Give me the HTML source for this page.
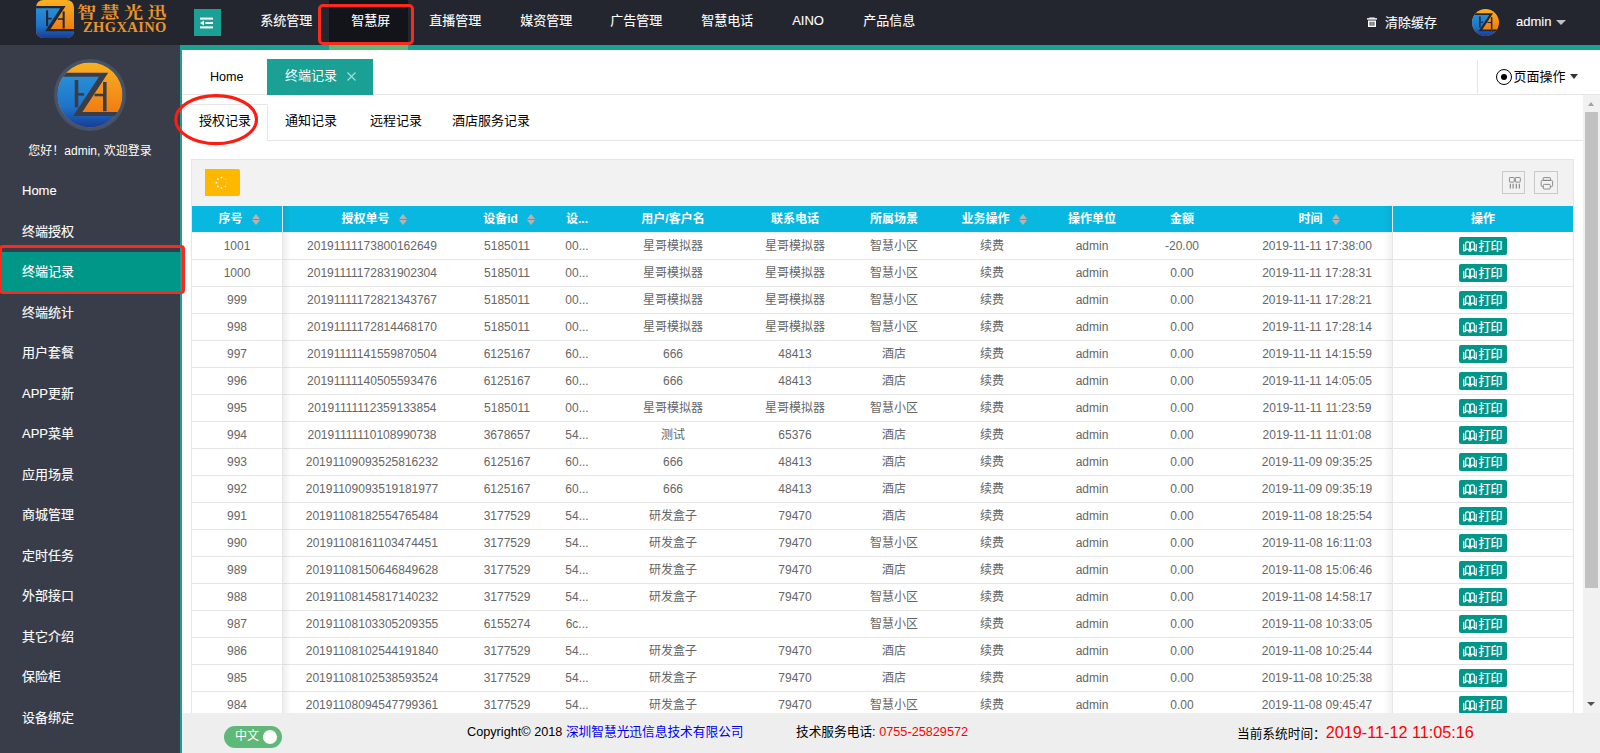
<!DOCTYPE html>
<html lang="zh-CN">
<head>
<meta charset="utf-8">
<title>智慧光迅</title>
<style>
*{box-sizing:border-box;margin:0;padding:0}
html,body{width:1600px;height:753px;overflow:hidden;background:#fff}
body{font-family:"Liberation Sans","Noto Sans CJK SC",sans-serif;font-size:14px;color:#333;position:relative}
.abs{position:absolute}
#hdr{position:absolute;left:0;top:0;width:1600px;height:45px;background:#23262e}
#hline{position:absolute;left:180px;top:45px;width:1420px;height:5px;background:#1aa094}
.nav{position:absolute;top:0;height:45px;line-height:42px;color:#fff;font-size:13px;white-space:nowrap;-webkit-text-stroke:0.1px #fff}
#navon{position:absolute;left:329px;top:0;width:79px;height:45px;background:#131419}
#navonb{position:absolute;left:329px;top:45px;width:79px;height:5px;background:#5fb878}
#ham{position:absolute;left:194px;top:9px;width:27px;height:27px;background:#1aa094}
#side{position:absolute;left:0;top:45px;width:180px;height:708px;background:#393d49}
#sideb{position:absolute;left:180px;top:45px;width:2px;height:708px;background:#1aa094}
.mi{position:absolute;left:0;width:180px;height:41px;line-height:41px;padding-left:22px;color:#fff;font-size:13px;white-space:nowrap;-webkit-text-stroke:0.1px #fff}
.mi.on{background:#009688}
.red{position:absolute;border:3px solid #fb2a1c;border-radius:4px}
#tabbar{position:absolute;left:182px;top:50px;width:1418px;height:45px;background:#fff;border-bottom:1px solid #e6e6e6}
#tabon{position:absolute;left:267px;top:59px;width:106px;height:36px;background:#1aa094;color:#fff;font-size:13px;line-height:34px;padding-left:18px;white-space:nowrap}
#pgop{position:absolute;left:1477px;top:60px;width:123px;height:34px;border-left:1px solid #e6e6e6;font-size:13px;line-height:34px;color:#000;white-space:nowrap}
.st{position:absolute;top:101px;height:40px;line-height:40px;font-size:13px;color:#000;white-space:nowrap}
#stline{position:absolute;left:182px;top:140px;width:1401px;height:1px;background:#e6e6e6}
#ston{position:absolute;left:182px;top:104px;width:86px;height:37px;border:1px solid #e6e6e6;border-bottom:1px solid #fff;border-left:none;border-radius:0 2px 0 0;background:#fff}
#panel{position:absolute;left:191px;top:159px;width:1383px;height:554px;background:#f2f2f2;border:1px solid #e6e6e6;border-bottom:none}
#thead{position:absolute;left:192px;top:206px;width:1381px;height:26px;background:#09b8e0}
.th{position:absolute;top:206px;height:26px;line-height:26px;text-align:center;color:#fff;font-size:12px;font-weight:bold;white-space:nowrap}
.tr{position:absolute;left:192px;width:1381px;height:27px;background:#fff;border-bottom:1px solid #e6e6e6}
.td{position:absolute;top:0;height:26px;line-height:26px;text-align:center;color:#666;font-size:12px;white-space:nowrap}
.vline{position:absolute;top:206px;width:1px;height:507px;background:#e6e6e6}
.btn{position:absolute;left:1459px;top:5px;width:48px;height:18px;background:#009688;border-radius:2px;color:#fff;font-size:12px;line-height:18px;white-space:nowrap}
#foot{position:absolute;left:182px;top:713px;width:1418px;height:40px;background:#eeeeee}
.ft{position:absolute;top:713px;height:40px;line-height:38px;font-size:12.7px;color:#000;white-space:nowrap}
#sb{position:absolute;left:1583px;top:95px;width:17px;height:618px;background:#f1f1f1}
#sbt{position:absolute;left:1585px;top:112px;width:13px;height:476px;background:#c1c1c1}
.tool{position:absolute;top:171px;border:1px solid #c9c9c9;background:#f2f2f2}
</style>
</head>
<body>

<svg width="0" height="0" style="position:absolute">
<defs>
<linearGradient id="gO" x1="0" y1="0" x2="0" y2="1"><stop offset="0" stop-color="#f9b122"/><stop offset="0.8" stop-color="#f07a12"/><stop offset="1" stop-color="#ee7410"/></linearGradient>
<linearGradient id="gB" x1="0" y1="0" x2="0" y2="1"><stop offset="0" stop-color="#2a8fd8"/><stop offset="0.6" stop-color="#1e74c8"/><stop offset="1" stop-color="#173c96"/></linearGradient>
</defs>
</svg>
<div id="hdr"></div><div id="hline"></div><div id="side"></div><div id="sideb"></div>
<svg class="abs" style="left:36px;top:0;overflow:hidden" width="38" height="38" viewBox="0 0 100 100"><defs><clipPath id="cpL"><rect x="0" y="0" width="100" height="100" rx="19"/></clipPath></defs><g clip-path="url(#cpL)">
<rect x="0" y="0" width="100" height="100" fill="url(#gO)"/>
<path d="M0 19 H71 L32 79 H100 V100 H0 Z" fill="url(#gB)"/>
<path d="M0 15.7 H78 L38.3 76 H100 V82.3 H24.2 L63.9 22 H0 Z" fill="#23262e"/>
<rect x="26.5" y="27" width="5.5" height="42" fill="#23262e"/>
<rect x="31" y="47" width="10" height="4" fill="#23262e"/>
<rect x="70" y="30" width="5.5" height="45" fill="#23262e"/>
<rect x="57" y="48" width="14" height="4" fill="#23262e"/>
</g></svg>
<div class="abs" style="left:77px;top:2px;height:20px;font-family:'Noto Serif CJK SC','Liberation Serif',serif;font-weight:bold;font-size:16px;line-height:20px;letter-spacing:3.6px;color:#ea942c;white-space:nowrap;transform:scaleX(1.2);transform-origin:0 0">智慧光迅</div>
<div class="abs" style="left:83px;top:19px;height:16px;font-family:'Liberation Serif',serif;font-weight:bold;font-size:14.5px;line-height:16px;letter-spacing:0.4px;color:#ea942c;white-space:nowrap">ZHGXAINO</div>
<div id="ham"><svg width="27" height="27" viewBox="0 0 27 27"><g fill="#fff"><rect x="6" y="8.6" width="13" height="2"/><rect x="11.4" y="13" width="7.6" height="2"/><rect x="6" y="17.4" width="13" height="2"/><path d="M6 14 L10 11.6 V16.4Z"/></g></svg></div>
<div id="navon"></div><div id="navonb"></div>
<div class="nav" style="left:260.2px">系统管理</div>
<div class="nav" style="left:351.2px">智慧屏</div>
<div class="nav" style="left:429.2px">直播管理</div>
<div class="nav" style="left:520.2px">媒资管理</div>
<div class="nav" style="left:610.2px">广告管理</div>
<div class="nav" style="left:701.2px">智慧电话</div>
<div class="nav" style="left:792.2px">AINO</div>
<div class="nav" style="left:863.2px">产品信息</div>
<div class="red" style="left:318px;top:4px;width:96px;height:41px;border-radius:5px"></div>
<svg class="abs" style="left:1366px;top:16px" width="12" height="12" viewBox="0 0 12 12"><g fill="#fff"><rect x="1" y="2.2" width="10" height="1.4"/><rect x="3.2" y="1.5" width="5.6" height="1"/><path d="M2 4.5 H10 V11 H2Z M3.6 5.8 V9.8 H4.6 V5.8Z M5.5 5.8 V9.8 H6.5 V5.8Z M7.4 5.8 V9.8 H8.4 V5.8Z" fill-rule="evenodd"/></g></svg>
<div class="nav" style="left:1385px;line-height:45px">清除缓存</div>
<svg class="abs" style="left:1472px;top:9px" width="27" height="27" viewBox="0 0 100 100"><defs><clipPath id="cpA"><circle cx="50" cy="50" r="50"/></clipPath></defs><g clip-path="url(#cpA)">
<rect x="0" y="0" width="100" height="100" fill="url(#gO)"/>
<path d="M0 19 H71 L32 79 H100 V100 H0 Z" fill="url(#gB)"/>
<path d="M0 15.7 H78 L38.3 76 H100 V82.3 H24.2 L63.9 22 H0 Z" fill="#23262e"/>
<rect x="26.5" y="27" width="5.5" height="42" fill="#23262e"/>
<rect x="31" y="47" width="10" height="4" fill="#23262e"/>
<rect x="70" y="30" width="5.5" height="45" fill="#23262e"/>
<rect x="57" y="48" width="14" height="4" fill="#23262e"/>
</g></svg>
<div class="nav" style="left:1516px;font-size:13px;line-height:44px">admin</div>
<div class="abs" style="left:1555.5px;top:20px;width:0;height:0;border-left:5.5px solid transparent;border-right:5.5px solid transparent;border-top:5.5px solid #c2c2c2"></div>
<svg class="abs" style="left:54px;top:59px" width="72" height="72" viewBox="0 0 72 72"><defs><clipPath id="cpS"><circle cx="36" cy="36" r="32.5"/></clipPath></defs><circle cx="36" cy="36" r="36" fill="#465367"/><g clip-path="url(#cpS)"><g transform="translate(3.5 3.5) scale(0.65)">
<rect x="0" y="0" width="100" height="100" fill="url(#gO)"/>
<path d="M0 19 H71 L32 79 H100 V100 H0 Z" fill="url(#gB)"/>
<path d="M0 15.7 H78 L38.3 76 H100 V82.3 H24.2 L63.9 22 H0 Z" fill="#393d49"/>
<rect x="26.5" y="27" width="5.5" height="42" fill="#393d49"/>
<rect x="31" y="47" width="10" height="4" fill="#393d49"/>
<rect x="70" y="30" width="5.5" height="45" fill="#393d49"/>
<rect x="57" y="48" width="14" height="4" fill="#393d49"/>
</g></g></svg>
<div class="abs" style="left:0;top:140px;width:180px;height:22px;line-height:22px;text-align:center;color:#fff;font-size:12px;white-space:nowrap">您好！admin, 欢迎登录</div>
<div class="mi" style="top:170.0px">Home</div>
<div class="mi" style="top:210.5px">终端授权</div>
<div class="abs" style="left:0;top:252px;width:180px;height:40px;background:#009688"></div>
<div class="mi" style="top:251.0px">终端记录</div>
<div class="mi" style="top:291.5px">终端统计</div>
<div class="mi" style="top:332.0px">用户套餐</div>
<div class="mi" style="top:372.5px">APP更新</div>
<div class="mi" style="top:413.0px">APP菜单</div>
<div class="mi" style="top:453.5px">应用场景</div>
<div class="mi" style="top:494.0px">商城管理</div>
<div class="mi" style="top:534.5px">定时任务</div>
<div class="mi" style="top:575.0px">外部接口</div>
<div class="mi" style="top:615.5px">其它介绍</div>
<div class="mi" style="top:656.0px">保险柜</div>
<div class="mi" style="top:696.5px">设备绑定</div>
<div class="red" style="left:-1px;top:245px;width:186px;height:49px;border-radius:4px"></div>
<div id="tabbar"></div>
<div class="abs" style="left:210px;top:60px;height:36px;line-height:34px;font-size:12.6px;color:#000">Home</div>
<div id="tabon">终端记录<svg style="position:absolute;left:80px;top:13px" width="9" height="9" viewBox="0 0 9 9"><path d="M0.5 0.5 L8.5 8.5 M8.5 0.5 L0.5 8.5" stroke="#a9dcd7" stroke-width="1.1" fill="none"/></svg></div>
<div id="pgop"><span style="position:absolute;left:18px;top:9px;width:16px;height:16px;border:1.4px solid #000;border-radius:50%"></span><span style="position:absolute;left:23px;top:14px;width:6px;height:6px;background:#000;border-radius:50%"></span><span style="position:absolute;left:35.4px">页面操作</span><span style="position:absolute;left:91.5px;top:14px;width:0;height:0;border-left:4.7px solid transparent;border-right:4.7px solid transparent;border-top:5px solid #333"></span></div>
<div id="stline"></div><div id="ston"></div>
<div class="st" style="left:199px">授权记录</div>
<div class="st" style="left:285px">通知记录</div>
<div class="st" style="left:370px">远程记录</div>
<div class="st" style="left:452px">酒店服务记录</div>
<svg class="abs" style="left:170px;top:92px" width="94" height="56" viewBox="0 0 94 56"><ellipse cx="46.1" cy="27.6" rx="40.4" ry="24" fill="none" stroke="#fb1d12" stroke-width="3.1"/></svg>
<div id="panel"></div>
<div class="abs" style="left:205px;top:169px;width:35px;height:27px;background:#ffb800;border-radius:0 2px 2px 0"><svg width="35" height="27" viewBox="0 0 35 27"><g fill="#fff"><circle cx="21.80" cy="13.70" r="0.40"/><circle cx="20.28" cy="17.38" r="0.70"/><circle cx="16.60" cy="18.90" r="0.85"/><circle cx="12.92" cy="17.38" r="0.90"/><circle cx="11.40" cy="13.70" r="1.00"/><circle cx="12.92" cy="10.02" r="1.05"/><circle cx="16.60" cy="8.50" r="1.00"/><circle cx="20.28" cy="10.02" r="0.45"/></g></svg></div>
<div class="tool" style="left:1502px;width:23px;height:23px"><svg style="position:absolute;left:-1px;top:-0.2px" width="23" height="22" viewBox="0 0 23 22"><g fill="none" stroke="#808080" stroke-width="0.9"><rect x="7.4" y="5.5" width="4.9" height="4.6" rx="0.6"/><rect x="13.4" y="5.5" width="4.9" height="4.6" rx="0.6"/><path d="M8.3 11.8 V16.5 M11.1 11.8 V16.5 M14.3 11.8 V16.5 M17.3 11.8 V16.5" stroke-width="1.1"/></g></svg></div>
<div class="tool" style="left:1534px;width:24px;height:23px"><svg style="position:absolute;left:-1px;top:-0.2px" width="24" height="22" viewBox="0 0 24 22"><g fill="none" stroke="#808080" stroke-width="0.9"><rect x="9.2" y="5.6" width="7.2" height="2.8" rx="0.5"/><path d="M9.3 14.6 H8.3 Q7.2 14.6 7.2 13.4 V9.6 Q7.2 8.4 8.3 8.4 H17.5 Q18.6 8.4 18.6 9.6 V13.4 Q18.6 14.6 17.5 14.6 H16.3"/><rect x="9.3" y="12.4" width="7" height="4.6" rx="1" fill="#f2f2f2"/></g></svg></div>
<div id="thead"></div>
<div class="th" style="left:192px;width:90px;padding-left:5px;">序号<span style="display:inline-block;position:relative;width:9px;height:12px;margin-left:9px;vertical-align:-2px"><i style="position:absolute;left:0;top:0.5px;border-left:4.5px solid transparent;border-right:4.5px solid transparent;border-bottom:5px solid #b4b4b4"></i><i style="position:absolute;left:0;top:6.5px;border-left:4.5px solid transparent;border-right:4.5px solid transparent;border-top:5px solid #b4b4b4"></i></span></div>
<div class="th" style="left:282px;width:180px;padding-left:5px;">授权单号<span style="display:inline-block;position:relative;width:9px;height:12px;margin-left:9px;vertical-align:-2px"><i style="position:absolute;left:0;top:0.5px;border-left:4.5px solid transparent;border-right:4.5px solid transparent;border-bottom:5px solid #b4b4b4"></i><i style="position:absolute;left:0;top:6.5px;border-left:4.5px solid transparent;border-right:4.5px solid transparent;border-top:5px solid #b4b4b4"></i></span></div>
<div class="th" style="left:462px;width:90px;padding-left:5px;">设备id<span style="display:inline-block;position:relative;width:9px;height:12px;margin-left:9px;vertical-align:-2px"><i style="position:absolute;left:0;top:0.5px;border-left:4.5px solid transparent;border-right:4.5px solid transparent;border-bottom:5px solid #b4b4b4"></i><i style="position:absolute;left:0;top:6.5px;border-left:4.5px solid transparent;border-right:4.5px solid transparent;border-top:5px solid #b4b4b4"></i></span></div>
<div class="th" style="left:552px;width:50px;">设...</div>
<div class="th" style="left:602px;width:142px;">用户/客户名</div>
<div class="th" style="left:744px;width:102px;">联系电话</div>
<div class="th" style="left:846px;width:96px;">所属场景</div>
<div class="th" style="left:942px;width:100px;padding-left:5px;">业务操作<span style="display:inline-block;position:relative;width:9px;height:12px;margin-left:9px;vertical-align:-2px"><i style="position:absolute;left:0;top:0.5px;border-left:4.5px solid transparent;border-right:4.5px solid transparent;border-bottom:5px solid #b4b4b4"></i><i style="position:absolute;left:0;top:6.5px;border-left:4.5px solid transparent;border-right:4.5px solid transparent;border-top:5px solid #b4b4b4"></i></span></div>
<div class="th" style="left:1042px;width:100px;">操作单位</div>
<div class="th" style="left:1142px;width:80px;">金额</div>
<div class="th" style="left:1222px;width:190px;padding-left:5px;">时间<span style="display:inline-block;position:relative;width:9px;height:12px;margin-left:9px;vertical-align:-2px"><i style="position:absolute;left:0;top:0.5px;border-left:4.5px solid transparent;border-right:4.5px solid transparent;border-bottom:5px solid #b4b4b4"></i><i style="position:absolute;left:0;top:6.5px;border-left:4.5px solid transparent;border-right:4.5px solid transparent;border-top:5px solid #b4b4b4"></i></span></div>
<div class="th" style="left:1393px;width:180px">操作</div>
<div class="tr" style="top:233px">
<span class="td" style="left:0px;width:90px">1001</span>
<span class="td" style="left:90px;width:180px">20191111173800162649</span>
<span class="td" style="left:270px;width:90px">5185011</span>
<span class="td" style="left:360px;width:50px">00...</span>
<span class="td" style="left:410px;width:142px">星哥模拟器</span>
<span class="td" style="left:552px;width:102px">星哥模拟器</span>
<span class="td" style="left:654px;width:96px">智慧小区</span>
<span class="td" style="left:750px;width:100px">续费</span>
<span class="td" style="left:850px;width:100px">admin</span>
<span class="td" style="left:950px;width:80px">-20.00</span>
<span class="td" style="left:1030px;width:190px">2019-11-11 17:38:00</span>
</div>
<div class="tr" style="top:260px">
<span class="td" style="left:0px;width:90px">1000</span>
<span class="td" style="left:90px;width:180px">20191111172831902304</span>
<span class="td" style="left:270px;width:90px">5185011</span>
<span class="td" style="left:360px;width:50px">00...</span>
<span class="td" style="left:410px;width:142px">星哥模拟器</span>
<span class="td" style="left:552px;width:102px">星哥模拟器</span>
<span class="td" style="left:654px;width:96px">智慧小区</span>
<span class="td" style="left:750px;width:100px">续费</span>
<span class="td" style="left:850px;width:100px">admin</span>
<span class="td" style="left:950px;width:80px">0.00</span>
<span class="td" style="left:1030px;width:190px">2019-11-11 17:28:31</span>
</div>
<div class="tr" style="top:287px">
<span class="td" style="left:0px;width:90px">999</span>
<span class="td" style="left:90px;width:180px">20191111172821343767</span>
<span class="td" style="left:270px;width:90px">5185011</span>
<span class="td" style="left:360px;width:50px">00...</span>
<span class="td" style="left:410px;width:142px">星哥模拟器</span>
<span class="td" style="left:552px;width:102px">星哥模拟器</span>
<span class="td" style="left:654px;width:96px">智慧小区</span>
<span class="td" style="left:750px;width:100px">续费</span>
<span class="td" style="left:850px;width:100px">admin</span>
<span class="td" style="left:950px;width:80px">0.00</span>
<span class="td" style="left:1030px;width:190px">2019-11-11 17:28:21</span>
</div>
<div class="tr" style="top:314px">
<span class="td" style="left:0px;width:90px">998</span>
<span class="td" style="left:90px;width:180px">20191111172814468170</span>
<span class="td" style="left:270px;width:90px">5185011</span>
<span class="td" style="left:360px;width:50px">00...</span>
<span class="td" style="left:410px;width:142px">星哥模拟器</span>
<span class="td" style="left:552px;width:102px">星哥模拟器</span>
<span class="td" style="left:654px;width:96px">智慧小区</span>
<span class="td" style="left:750px;width:100px">续费</span>
<span class="td" style="left:850px;width:100px">admin</span>
<span class="td" style="left:950px;width:80px">0.00</span>
<span class="td" style="left:1030px;width:190px">2019-11-11 17:28:14</span>
</div>
<div class="tr" style="top:341px">
<span class="td" style="left:0px;width:90px">997</span>
<span class="td" style="left:90px;width:180px">20191111141559870504</span>
<span class="td" style="left:270px;width:90px">6125167</span>
<span class="td" style="left:360px;width:50px">60...</span>
<span class="td" style="left:410px;width:142px">666</span>
<span class="td" style="left:552px;width:102px">48413</span>
<span class="td" style="left:654px;width:96px">酒店</span>
<span class="td" style="left:750px;width:100px">续费</span>
<span class="td" style="left:850px;width:100px">admin</span>
<span class="td" style="left:950px;width:80px">0.00</span>
<span class="td" style="left:1030px;width:190px">2019-11-11 14:15:59</span>
</div>
<div class="tr" style="top:368px">
<span class="td" style="left:0px;width:90px">996</span>
<span class="td" style="left:90px;width:180px">20191111140505593476</span>
<span class="td" style="left:270px;width:90px">6125167</span>
<span class="td" style="left:360px;width:50px">60...</span>
<span class="td" style="left:410px;width:142px">666</span>
<span class="td" style="left:552px;width:102px">48413</span>
<span class="td" style="left:654px;width:96px">酒店</span>
<span class="td" style="left:750px;width:100px">续费</span>
<span class="td" style="left:850px;width:100px">admin</span>
<span class="td" style="left:950px;width:80px">0.00</span>
<span class="td" style="left:1030px;width:190px">2019-11-11 14:05:05</span>
</div>
<div class="tr" style="top:395px">
<span class="td" style="left:0px;width:90px">995</span>
<span class="td" style="left:90px;width:180px">20191111112359133854</span>
<span class="td" style="left:270px;width:90px">5185011</span>
<span class="td" style="left:360px;width:50px">00...</span>
<span class="td" style="left:410px;width:142px">星哥模拟器</span>
<span class="td" style="left:552px;width:102px">星哥模拟器</span>
<span class="td" style="left:654px;width:96px">智慧小区</span>
<span class="td" style="left:750px;width:100px">续费</span>
<span class="td" style="left:850px;width:100px">admin</span>
<span class="td" style="left:950px;width:80px">0.00</span>
<span class="td" style="left:1030px;width:190px">2019-11-11 11:23:59</span>
</div>
<div class="tr" style="top:422px">
<span class="td" style="left:0px;width:90px">994</span>
<span class="td" style="left:90px;width:180px">20191111110108990738</span>
<span class="td" style="left:270px;width:90px">3678657</span>
<span class="td" style="left:360px;width:50px">54...</span>
<span class="td" style="left:410px;width:142px">测试</span>
<span class="td" style="left:552px;width:102px">65376</span>
<span class="td" style="left:654px;width:96px">酒店</span>
<span class="td" style="left:750px;width:100px">续费</span>
<span class="td" style="left:850px;width:100px">admin</span>
<span class="td" style="left:950px;width:80px">0.00</span>
<span class="td" style="left:1030px;width:190px">2019-11-11 11:01:08</span>
</div>
<div class="tr" style="top:449px">
<span class="td" style="left:0px;width:90px">993</span>
<span class="td" style="left:90px;width:180px">20191109093525816232</span>
<span class="td" style="left:270px;width:90px">6125167</span>
<span class="td" style="left:360px;width:50px">60...</span>
<span class="td" style="left:410px;width:142px">666</span>
<span class="td" style="left:552px;width:102px">48413</span>
<span class="td" style="left:654px;width:96px">酒店</span>
<span class="td" style="left:750px;width:100px">续费</span>
<span class="td" style="left:850px;width:100px">admin</span>
<span class="td" style="left:950px;width:80px">0.00</span>
<span class="td" style="left:1030px;width:190px">2019-11-09 09:35:25</span>
</div>
<div class="tr" style="top:476px">
<span class="td" style="left:0px;width:90px">992</span>
<span class="td" style="left:90px;width:180px">20191109093519181977</span>
<span class="td" style="left:270px;width:90px">6125167</span>
<span class="td" style="left:360px;width:50px">60...</span>
<span class="td" style="left:410px;width:142px">666</span>
<span class="td" style="left:552px;width:102px">48413</span>
<span class="td" style="left:654px;width:96px">酒店</span>
<span class="td" style="left:750px;width:100px">续费</span>
<span class="td" style="left:850px;width:100px">admin</span>
<span class="td" style="left:950px;width:80px">0.00</span>
<span class="td" style="left:1030px;width:190px">2019-11-09 09:35:19</span>
</div>
<div class="tr" style="top:503px">
<span class="td" style="left:0px;width:90px">991</span>
<span class="td" style="left:90px;width:180px">20191108182554765484</span>
<span class="td" style="left:270px;width:90px">3177529</span>
<span class="td" style="left:360px;width:50px">54...</span>
<span class="td" style="left:410px;width:142px">研发盒子</span>
<span class="td" style="left:552px;width:102px">79470</span>
<span class="td" style="left:654px;width:96px">酒店</span>
<span class="td" style="left:750px;width:100px">续费</span>
<span class="td" style="left:850px;width:100px">admin</span>
<span class="td" style="left:950px;width:80px">0.00</span>
<span class="td" style="left:1030px;width:190px">2019-11-08 18:25:54</span>
</div>
<div class="tr" style="top:530px">
<span class="td" style="left:0px;width:90px">990</span>
<span class="td" style="left:90px;width:180px">20191108161103474451</span>
<span class="td" style="left:270px;width:90px">3177529</span>
<span class="td" style="left:360px;width:50px">54...</span>
<span class="td" style="left:410px;width:142px">研发盒子</span>
<span class="td" style="left:552px;width:102px">79470</span>
<span class="td" style="left:654px;width:96px">智慧小区</span>
<span class="td" style="left:750px;width:100px">续费</span>
<span class="td" style="left:850px;width:100px">admin</span>
<span class="td" style="left:950px;width:80px">0.00</span>
<span class="td" style="left:1030px;width:190px">2019-11-08 16:11:03</span>
</div>
<div class="tr" style="top:557px">
<span class="td" style="left:0px;width:90px">989</span>
<span class="td" style="left:90px;width:180px">20191108150646849628</span>
<span class="td" style="left:270px;width:90px">3177529</span>
<span class="td" style="left:360px;width:50px">54...</span>
<span class="td" style="left:410px;width:142px">研发盒子</span>
<span class="td" style="left:552px;width:102px">79470</span>
<span class="td" style="left:654px;width:96px">酒店</span>
<span class="td" style="left:750px;width:100px">续费</span>
<span class="td" style="left:850px;width:100px">admin</span>
<span class="td" style="left:950px;width:80px">0.00</span>
<span class="td" style="left:1030px;width:190px">2019-11-08 15:06:46</span>
</div>
<div class="tr" style="top:584px">
<span class="td" style="left:0px;width:90px">988</span>
<span class="td" style="left:90px;width:180px">20191108145817140232</span>
<span class="td" style="left:270px;width:90px">3177529</span>
<span class="td" style="left:360px;width:50px">54...</span>
<span class="td" style="left:410px;width:142px">研发盒子</span>
<span class="td" style="left:552px;width:102px">79470</span>
<span class="td" style="left:654px;width:96px">智慧小区</span>
<span class="td" style="left:750px;width:100px">续费</span>
<span class="td" style="left:850px;width:100px">admin</span>
<span class="td" style="left:950px;width:80px">0.00</span>
<span class="td" style="left:1030px;width:190px">2019-11-08 14:58:17</span>
</div>
<div class="tr" style="top:611px">
<span class="td" style="left:0px;width:90px">987</span>
<span class="td" style="left:90px;width:180px">20191108103305209355</span>
<span class="td" style="left:270px;width:90px">6155274</span>
<span class="td" style="left:360px;width:50px">6c...</span>
<span class="td" style="left:410px;width:142px"></span>
<span class="td" style="left:552px;width:102px"></span>
<span class="td" style="left:654px;width:96px">智慧小区</span>
<span class="td" style="left:750px;width:100px">续费</span>
<span class="td" style="left:850px;width:100px">admin</span>
<span class="td" style="left:950px;width:80px">0.00</span>
<span class="td" style="left:1030px;width:190px">2019-11-08 10:33:05</span>
</div>
<div class="tr" style="top:638px">
<span class="td" style="left:0px;width:90px">986</span>
<span class="td" style="left:90px;width:180px">20191108102544191840</span>
<span class="td" style="left:270px;width:90px">3177529</span>
<span class="td" style="left:360px;width:50px">54...</span>
<span class="td" style="left:410px;width:142px">研发盒子</span>
<span class="td" style="left:552px;width:102px">79470</span>
<span class="td" style="left:654px;width:96px">酒店</span>
<span class="td" style="left:750px;width:100px">续费</span>
<span class="td" style="left:850px;width:100px">admin</span>
<span class="td" style="left:950px;width:80px">0.00</span>
<span class="td" style="left:1030px;width:190px">2019-11-08 10:25:44</span>
</div>
<div class="tr" style="top:665px">
<span class="td" style="left:0px;width:90px">985</span>
<span class="td" style="left:90px;width:180px">20191108102538593524</span>
<span class="td" style="left:270px;width:90px">3177529</span>
<span class="td" style="left:360px;width:50px">54...</span>
<span class="td" style="left:410px;width:142px">研发盒子</span>
<span class="td" style="left:552px;width:102px">79470</span>
<span class="td" style="left:654px;width:96px">酒店</span>
<span class="td" style="left:750px;width:100px">续费</span>
<span class="td" style="left:850px;width:100px">admin</span>
<span class="td" style="left:950px;width:80px">0.00</span>
<span class="td" style="left:1030px;width:190px">2019-11-08 10:25:38</span>
</div>
<div class="tr" style="top:692px">
<span class="td" style="left:0px;width:90px">984</span>
<span class="td" style="left:90px;width:180px">20191108094547799361</span>
<span class="td" style="left:270px;width:90px">3177529</span>
<span class="td" style="left:360px;width:50px">54...</span>
<span class="td" style="left:410px;width:142px">研发盒子</span>
<span class="td" style="left:552px;width:102px">79470</span>
<span class="td" style="left:654px;width:96px">智慧小区</span>
<span class="td" style="left:750px;width:100px">续费</span>
<span class="td" style="left:850px;width:100px">admin</span>
<span class="td" style="left:950px;width:80px">0.00</span>
<span class="td" style="left:1030px;width:190px">2019-11-08 09:45:47</span>
</div>
<div class="abs" style="left:1383px;top:205px;width:10px;height:508px;background:linear-gradient(to right,rgba(0,0,0,0),rgba(0,0,0,0.06))"></div>
<div class="abs" style="left:1393px;top:232px;width:180px;height:481px;background:#fff"></div>
<div class="abs" style="left:1393px;top:259px;width:180px;height:1px;background:#e6e6e6"></div>
<div class="btn" style="top:237px"><svg style="position:absolute;left:4px;top:4px" width="14" height="11" viewBox="0 0 14 11"><g fill="none" stroke="#fff" stroke-width="1.15" stroke-linejoin="round" stroke-linecap="round"><path d="M0.8 3.4 V10 L2.6 9.4 M13.2 3.4 V10 L11.4 9.4"/><path d="M2.7 8.6 V2.4 Q2.7 0.8 4.6 0.8 Q6.6 0.8 6.6 2.4 V8.9 Q4.6 7.4 2.7 8.6Z"/><path d="M11.3 8.6 V2.4 Q11.3 0.8 9.4 0.8 Q7.4 0.8 7.4 2.4 V8.9 Q9.4 7.4 11.3 8.6Z"/><path d="M5.6 9.8 Q7 10.6 8.4 9.8"/></g></svg><span style="position:absolute;left:19.5px;top:0.5px;-webkit-text-stroke:0.22px #fff">打印</span></div>
<div class="abs" style="left:1393px;top:286px;width:180px;height:1px;background:#e6e6e6"></div>
<div class="btn" style="top:264px"><svg style="position:absolute;left:4px;top:4px" width="14" height="11" viewBox="0 0 14 11"><g fill="none" stroke="#fff" stroke-width="1.15" stroke-linejoin="round" stroke-linecap="round"><path d="M0.8 3.4 V10 L2.6 9.4 M13.2 3.4 V10 L11.4 9.4"/><path d="M2.7 8.6 V2.4 Q2.7 0.8 4.6 0.8 Q6.6 0.8 6.6 2.4 V8.9 Q4.6 7.4 2.7 8.6Z"/><path d="M11.3 8.6 V2.4 Q11.3 0.8 9.4 0.8 Q7.4 0.8 7.4 2.4 V8.9 Q9.4 7.4 11.3 8.6Z"/><path d="M5.6 9.8 Q7 10.6 8.4 9.8"/></g></svg><span style="position:absolute;left:19.5px;top:0.5px;-webkit-text-stroke:0.22px #fff">打印</span></div>
<div class="abs" style="left:1393px;top:313px;width:180px;height:1px;background:#e6e6e6"></div>
<div class="btn" style="top:291px"><svg style="position:absolute;left:4px;top:4px" width="14" height="11" viewBox="0 0 14 11"><g fill="none" stroke="#fff" stroke-width="1.15" stroke-linejoin="round" stroke-linecap="round"><path d="M0.8 3.4 V10 L2.6 9.4 M13.2 3.4 V10 L11.4 9.4"/><path d="M2.7 8.6 V2.4 Q2.7 0.8 4.6 0.8 Q6.6 0.8 6.6 2.4 V8.9 Q4.6 7.4 2.7 8.6Z"/><path d="M11.3 8.6 V2.4 Q11.3 0.8 9.4 0.8 Q7.4 0.8 7.4 2.4 V8.9 Q9.4 7.4 11.3 8.6Z"/><path d="M5.6 9.8 Q7 10.6 8.4 9.8"/></g></svg><span style="position:absolute;left:19.5px;top:0.5px;-webkit-text-stroke:0.22px #fff">打印</span></div>
<div class="abs" style="left:1393px;top:340px;width:180px;height:1px;background:#e6e6e6"></div>
<div class="btn" style="top:318px"><svg style="position:absolute;left:4px;top:4px" width="14" height="11" viewBox="0 0 14 11"><g fill="none" stroke="#fff" stroke-width="1.15" stroke-linejoin="round" stroke-linecap="round"><path d="M0.8 3.4 V10 L2.6 9.4 M13.2 3.4 V10 L11.4 9.4"/><path d="M2.7 8.6 V2.4 Q2.7 0.8 4.6 0.8 Q6.6 0.8 6.6 2.4 V8.9 Q4.6 7.4 2.7 8.6Z"/><path d="M11.3 8.6 V2.4 Q11.3 0.8 9.4 0.8 Q7.4 0.8 7.4 2.4 V8.9 Q9.4 7.4 11.3 8.6Z"/><path d="M5.6 9.8 Q7 10.6 8.4 9.8"/></g></svg><span style="position:absolute;left:19.5px;top:0.5px;-webkit-text-stroke:0.22px #fff">打印</span></div>
<div class="abs" style="left:1393px;top:367px;width:180px;height:1px;background:#e6e6e6"></div>
<div class="btn" style="top:345px"><svg style="position:absolute;left:4px;top:4px" width="14" height="11" viewBox="0 0 14 11"><g fill="none" stroke="#fff" stroke-width="1.15" stroke-linejoin="round" stroke-linecap="round"><path d="M0.8 3.4 V10 L2.6 9.4 M13.2 3.4 V10 L11.4 9.4"/><path d="M2.7 8.6 V2.4 Q2.7 0.8 4.6 0.8 Q6.6 0.8 6.6 2.4 V8.9 Q4.6 7.4 2.7 8.6Z"/><path d="M11.3 8.6 V2.4 Q11.3 0.8 9.4 0.8 Q7.4 0.8 7.4 2.4 V8.9 Q9.4 7.4 11.3 8.6Z"/><path d="M5.6 9.8 Q7 10.6 8.4 9.8"/></g></svg><span style="position:absolute;left:19.5px;top:0.5px;-webkit-text-stroke:0.22px #fff">打印</span></div>
<div class="abs" style="left:1393px;top:394px;width:180px;height:1px;background:#e6e6e6"></div>
<div class="btn" style="top:372px"><svg style="position:absolute;left:4px;top:4px" width="14" height="11" viewBox="0 0 14 11"><g fill="none" stroke="#fff" stroke-width="1.15" stroke-linejoin="round" stroke-linecap="round"><path d="M0.8 3.4 V10 L2.6 9.4 M13.2 3.4 V10 L11.4 9.4"/><path d="M2.7 8.6 V2.4 Q2.7 0.8 4.6 0.8 Q6.6 0.8 6.6 2.4 V8.9 Q4.6 7.4 2.7 8.6Z"/><path d="M11.3 8.6 V2.4 Q11.3 0.8 9.4 0.8 Q7.4 0.8 7.4 2.4 V8.9 Q9.4 7.4 11.3 8.6Z"/><path d="M5.6 9.8 Q7 10.6 8.4 9.8"/></g></svg><span style="position:absolute;left:19.5px;top:0.5px;-webkit-text-stroke:0.22px #fff">打印</span></div>
<div class="abs" style="left:1393px;top:421px;width:180px;height:1px;background:#e6e6e6"></div>
<div class="btn" style="top:399px"><svg style="position:absolute;left:4px;top:4px" width="14" height="11" viewBox="0 0 14 11"><g fill="none" stroke="#fff" stroke-width="1.15" stroke-linejoin="round" stroke-linecap="round"><path d="M0.8 3.4 V10 L2.6 9.4 M13.2 3.4 V10 L11.4 9.4"/><path d="M2.7 8.6 V2.4 Q2.7 0.8 4.6 0.8 Q6.6 0.8 6.6 2.4 V8.9 Q4.6 7.4 2.7 8.6Z"/><path d="M11.3 8.6 V2.4 Q11.3 0.8 9.4 0.8 Q7.4 0.8 7.4 2.4 V8.9 Q9.4 7.4 11.3 8.6Z"/><path d="M5.6 9.8 Q7 10.6 8.4 9.8"/></g></svg><span style="position:absolute;left:19.5px;top:0.5px;-webkit-text-stroke:0.22px #fff">打印</span></div>
<div class="abs" style="left:1393px;top:448px;width:180px;height:1px;background:#e6e6e6"></div>
<div class="btn" style="top:426px"><svg style="position:absolute;left:4px;top:4px" width="14" height="11" viewBox="0 0 14 11"><g fill="none" stroke="#fff" stroke-width="1.15" stroke-linejoin="round" stroke-linecap="round"><path d="M0.8 3.4 V10 L2.6 9.4 M13.2 3.4 V10 L11.4 9.4"/><path d="M2.7 8.6 V2.4 Q2.7 0.8 4.6 0.8 Q6.6 0.8 6.6 2.4 V8.9 Q4.6 7.4 2.7 8.6Z"/><path d="M11.3 8.6 V2.4 Q11.3 0.8 9.4 0.8 Q7.4 0.8 7.4 2.4 V8.9 Q9.4 7.4 11.3 8.6Z"/><path d="M5.6 9.8 Q7 10.6 8.4 9.8"/></g></svg><span style="position:absolute;left:19.5px;top:0.5px;-webkit-text-stroke:0.22px #fff">打印</span></div>
<div class="abs" style="left:1393px;top:475px;width:180px;height:1px;background:#e6e6e6"></div>
<div class="btn" style="top:453px"><svg style="position:absolute;left:4px;top:4px" width="14" height="11" viewBox="0 0 14 11"><g fill="none" stroke="#fff" stroke-width="1.15" stroke-linejoin="round" stroke-linecap="round"><path d="M0.8 3.4 V10 L2.6 9.4 M13.2 3.4 V10 L11.4 9.4"/><path d="M2.7 8.6 V2.4 Q2.7 0.8 4.6 0.8 Q6.6 0.8 6.6 2.4 V8.9 Q4.6 7.4 2.7 8.6Z"/><path d="M11.3 8.6 V2.4 Q11.3 0.8 9.4 0.8 Q7.4 0.8 7.4 2.4 V8.9 Q9.4 7.4 11.3 8.6Z"/><path d="M5.6 9.8 Q7 10.6 8.4 9.8"/></g></svg><span style="position:absolute;left:19.5px;top:0.5px;-webkit-text-stroke:0.22px #fff">打印</span></div>
<div class="abs" style="left:1393px;top:502px;width:180px;height:1px;background:#e6e6e6"></div>
<div class="btn" style="top:480px"><svg style="position:absolute;left:4px;top:4px" width="14" height="11" viewBox="0 0 14 11"><g fill="none" stroke="#fff" stroke-width="1.15" stroke-linejoin="round" stroke-linecap="round"><path d="M0.8 3.4 V10 L2.6 9.4 M13.2 3.4 V10 L11.4 9.4"/><path d="M2.7 8.6 V2.4 Q2.7 0.8 4.6 0.8 Q6.6 0.8 6.6 2.4 V8.9 Q4.6 7.4 2.7 8.6Z"/><path d="M11.3 8.6 V2.4 Q11.3 0.8 9.4 0.8 Q7.4 0.8 7.4 2.4 V8.9 Q9.4 7.4 11.3 8.6Z"/><path d="M5.6 9.8 Q7 10.6 8.4 9.8"/></g></svg><span style="position:absolute;left:19.5px;top:0.5px;-webkit-text-stroke:0.22px #fff">打印</span></div>
<div class="abs" style="left:1393px;top:529px;width:180px;height:1px;background:#e6e6e6"></div>
<div class="btn" style="top:507px"><svg style="position:absolute;left:4px;top:4px" width="14" height="11" viewBox="0 0 14 11"><g fill="none" stroke="#fff" stroke-width="1.15" stroke-linejoin="round" stroke-linecap="round"><path d="M0.8 3.4 V10 L2.6 9.4 M13.2 3.4 V10 L11.4 9.4"/><path d="M2.7 8.6 V2.4 Q2.7 0.8 4.6 0.8 Q6.6 0.8 6.6 2.4 V8.9 Q4.6 7.4 2.7 8.6Z"/><path d="M11.3 8.6 V2.4 Q11.3 0.8 9.4 0.8 Q7.4 0.8 7.4 2.4 V8.9 Q9.4 7.4 11.3 8.6Z"/><path d="M5.6 9.8 Q7 10.6 8.4 9.8"/></g></svg><span style="position:absolute;left:19.5px;top:0.5px;-webkit-text-stroke:0.22px #fff">打印</span></div>
<div class="abs" style="left:1393px;top:556px;width:180px;height:1px;background:#e6e6e6"></div>
<div class="btn" style="top:534px"><svg style="position:absolute;left:4px;top:4px" width="14" height="11" viewBox="0 0 14 11"><g fill="none" stroke="#fff" stroke-width="1.15" stroke-linejoin="round" stroke-linecap="round"><path d="M0.8 3.4 V10 L2.6 9.4 M13.2 3.4 V10 L11.4 9.4"/><path d="M2.7 8.6 V2.4 Q2.7 0.8 4.6 0.8 Q6.6 0.8 6.6 2.4 V8.9 Q4.6 7.4 2.7 8.6Z"/><path d="M11.3 8.6 V2.4 Q11.3 0.8 9.4 0.8 Q7.4 0.8 7.4 2.4 V8.9 Q9.4 7.4 11.3 8.6Z"/><path d="M5.6 9.8 Q7 10.6 8.4 9.8"/></g></svg><span style="position:absolute;left:19.5px;top:0.5px;-webkit-text-stroke:0.22px #fff">打印</span></div>
<div class="abs" style="left:1393px;top:583px;width:180px;height:1px;background:#e6e6e6"></div>
<div class="btn" style="top:561px"><svg style="position:absolute;left:4px;top:4px" width="14" height="11" viewBox="0 0 14 11"><g fill="none" stroke="#fff" stroke-width="1.15" stroke-linejoin="round" stroke-linecap="round"><path d="M0.8 3.4 V10 L2.6 9.4 M13.2 3.4 V10 L11.4 9.4"/><path d="M2.7 8.6 V2.4 Q2.7 0.8 4.6 0.8 Q6.6 0.8 6.6 2.4 V8.9 Q4.6 7.4 2.7 8.6Z"/><path d="M11.3 8.6 V2.4 Q11.3 0.8 9.4 0.8 Q7.4 0.8 7.4 2.4 V8.9 Q9.4 7.4 11.3 8.6Z"/><path d="M5.6 9.8 Q7 10.6 8.4 9.8"/></g></svg><span style="position:absolute;left:19.5px;top:0.5px;-webkit-text-stroke:0.22px #fff">打印</span></div>
<div class="abs" style="left:1393px;top:610px;width:180px;height:1px;background:#e6e6e6"></div>
<div class="btn" style="top:588px"><svg style="position:absolute;left:4px;top:4px" width="14" height="11" viewBox="0 0 14 11"><g fill="none" stroke="#fff" stroke-width="1.15" stroke-linejoin="round" stroke-linecap="round"><path d="M0.8 3.4 V10 L2.6 9.4 M13.2 3.4 V10 L11.4 9.4"/><path d="M2.7 8.6 V2.4 Q2.7 0.8 4.6 0.8 Q6.6 0.8 6.6 2.4 V8.9 Q4.6 7.4 2.7 8.6Z"/><path d="M11.3 8.6 V2.4 Q11.3 0.8 9.4 0.8 Q7.4 0.8 7.4 2.4 V8.9 Q9.4 7.4 11.3 8.6Z"/><path d="M5.6 9.8 Q7 10.6 8.4 9.8"/></g></svg><span style="position:absolute;left:19.5px;top:0.5px;-webkit-text-stroke:0.22px #fff">打印</span></div>
<div class="abs" style="left:1393px;top:637px;width:180px;height:1px;background:#e6e6e6"></div>
<div class="btn" style="top:615px"><svg style="position:absolute;left:4px;top:4px" width="14" height="11" viewBox="0 0 14 11"><g fill="none" stroke="#fff" stroke-width="1.15" stroke-linejoin="round" stroke-linecap="round"><path d="M0.8 3.4 V10 L2.6 9.4 M13.2 3.4 V10 L11.4 9.4"/><path d="M2.7 8.6 V2.4 Q2.7 0.8 4.6 0.8 Q6.6 0.8 6.6 2.4 V8.9 Q4.6 7.4 2.7 8.6Z"/><path d="M11.3 8.6 V2.4 Q11.3 0.8 9.4 0.8 Q7.4 0.8 7.4 2.4 V8.9 Q9.4 7.4 11.3 8.6Z"/><path d="M5.6 9.8 Q7 10.6 8.4 9.8"/></g></svg><span style="position:absolute;left:19.5px;top:0.5px;-webkit-text-stroke:0.22px #fff">打印</span></div>
<div class="abs" style="left:1393px;top:664px;width:180px;height:1px;background:#e6e6e6"></div>
<div class="btn" style="top:642px"><svg style="position:absolute;left:4px;top:4px" width="14" height="11" viewBox="0 0 14 11"><g fill="none" stroke="#fff" stroke-width="1.15" stroke-linejoin="round" stroke-linecap="round"><path d="M0.8 3.4 V10 L2.6 9.4 M13.2 3.4 V10 L11.4 9.4"/><path d="M2.7 8.6 V2.4 Q2.7 0.8 4.6 0.8 Q6.6 0.8 6.6 2.4 V8.9 Q4.6 7.4 2.7 8.6Z"/><path d="M11.3 8.6 V2.4 Q11.3 0.8 9.4 0.8 Q7.4 0.8 7.4 2.4 V8.9 Q9.4 7.4 11.3 8.6Z"/><path d="M5.6 9.8 Q7 10.6 8.4 9.8"/></g></svg><span style="position:absolute;left:19.5px;top:0.5px;-webkit-text-stroke:0.22px #fff">打印</span></div>
<div class="abs" style="left:1393px;top:691px;width:180px;height:1px;background:#e6e6e6"></div>
<div class="btn" style="top:669px"><svg style="position:absolute;left:4px;top:4px" width="14" height="11" viewBox="0 0 14 11"><g fill="none" stroke="#fff" stroke-width="1.15" stroke-linejoin="round" stroke-linecap="round"><path d="M0.8 3.4 V10 L2.6 9.4 M13.2 3.4 V10 L11.4 9.4"/><path d="M2.7 8.6 V2.4 Q2.7 0.8 4.6 0.8 Q6.6 0.8 6.6 2.4 V8.9 Q4.6 7.4 2.7 8.6Z"/><path d="M11.3 8.6 V2.4 Q11.3 0.8 9.4 0.8 Q7.4 0.8 7.4 2.4 V8.9 Q9.4 7.4 11.3 8.6Z"/><path d="M5.6 9.8 Q7 10.6 8.4 9.8"/></g></svg><span style="position:absolute;left:19.5px;top:0.5px;-webkit-text-stroke:0.22px #fff">打印</span></div>
<div class="abs" style="left:1393px;top:718px;width:180px;height:1px;background:#e6e6e6"></div>
<div class="btn" style="top:696px"><svg style="position:absolute;left:4px;top:4px" width="14" height="11" viewBox="0 0 14 11"><g fill="none" stroke="#fff" stroke-width="1.15" stroke-linejoin="round" stroke-linecap="round"><path d="M0.8 3.4 V10 L2.6 9.4 M13.2 3.4 V10 L11.4 9.4"/><path d="M2.7 8.6 V2.4 Q2.7 0.8 4.6 0.8 Q6.6 0.8 6.6 2.4 V8.9 Q4.6 7.4 2.7 8.6Z"/><path d="M11.3 8.6 V2.4 Q11.3 0.8 9.4 0.8 Q7.4 0.8 7.4 2.4 V8.9 Q9.4 7.4 11.3 8.6Z"/><path d="M5.6 9.8 Q7 10.6 8.4 9.8"/></g></svg><span style="position:absolute;left:19.5px;top:0.5px;-webkit-text-stroke:0.22px #fff">打印</span></div>
<div class="abs" style="left:283px;top:206px;width:8px;height:507px;background:linear-gradient(to right,rgba(0,0,0,0.07),rgba(0,0,0,0))"></div>
<div class="vline" style="left:282px"></div><div class="vline" style="left:1392px"></div>
<div id="sb"></div><div id="sbt"></div>
<div class="abs" style="left:1587.8px;top:102px;width:0;height:0;border-left:3.7px solid transparent;border-right:3.7px solid transparent;border-bottom:4px solid #a3a3a3"></div>
<div class="abs" style="left:1587.4px;top:702px;width:0;height:0;border-left:4px solid transparent;border-right:4px solid transparent;border-top:4.6px solid #505050"></div>
<div id="foot"></div>
<div class="abs" style="left:224px;top:726px;width:58px;height:22px;border-radius:11px;background:#5fb878;color:#fff;font-size:12px;line-height:20px;padding-left:11px">中文<span style="position:absolute;left:39px;top:4px;width:14px;height:14px;border-radius:50%;background:#fff"></span></div>
<div class="ft" style="left:467px">Copyright© 2018 <span style="color:#0000ee">深圳智慧光迅信息技术有限公司</span></div>
<div class="ft" style="left:796px">技术服务电话: <span style="color:#ff0000">0755-25829572</span></div>
<div class="ft" style="left:1237px;line-height:39px">当前系统时间：<span style="color:#ff0000;font-size:16.2px">2019-11-12 11:05:16</span></div>
</body></html>
